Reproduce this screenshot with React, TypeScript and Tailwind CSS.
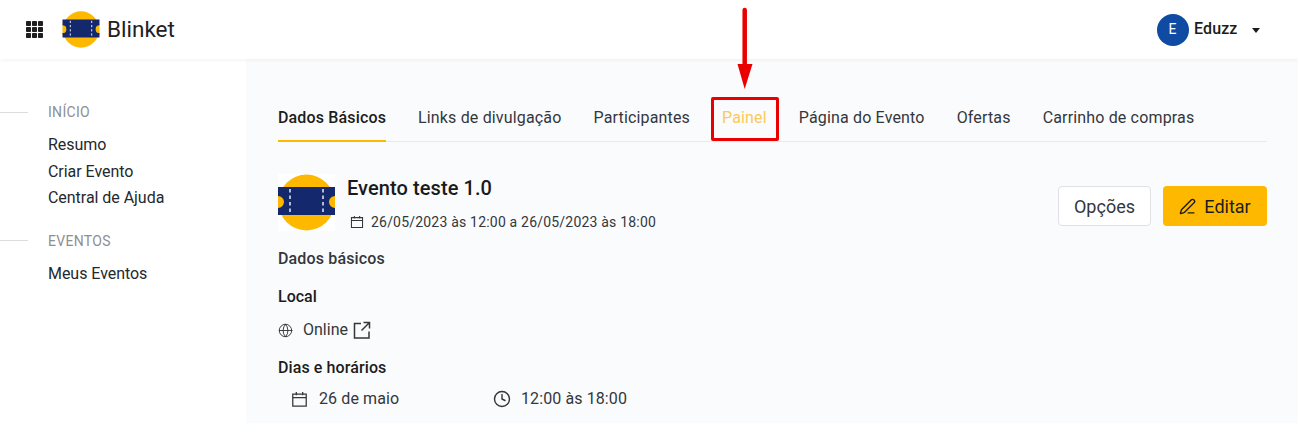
import { Clock, Globe, PenLine } from "lucide-react";

const TicketLogo = ({ className }: { className: string }) => (
  <svg viewBox="0 0 57 57" className={className} aria-hidden="true">
    <circle cx="28.5" cy="28.5" r="28" fill="#ffb800" />
    <rect x="0" y="20" width="57" height="16" fill="#ffb800" />
    <path d="M0 13h57v9a6 6 0 0 0 0 12v7H0v-7a6 6 0 0 0 0-12z" fill="#14286e" />
    <path d="M12 15v26M45 15v26" stroke="#e8ecf5" strokeWidth="1.5" strokeDasharray="3.5 3" />
  </svg>
);

const GridIcon = () => (
  <svg viewBox="0 0 17 17" className="h-[17px] w-[17px]" fill="#1f1f1f" aria-hidden="true">
    {[0, 6, 12].map((y) =>
      [0, 6, 12].map((x) => <rect key={`${x}-${y}`} x={x} y={y} width="5" height="5" rx="0.8" />),
    )}
  </svg>
);

const CalendarIcon = ({ className }: { className: string }) => (
  <svg viewBox="0 0 24 24" className={className} fill="none" stroke="currentColor" strokeWidth="1.8" aria-hidden="true">
    <path d="M2.5 4.5h19v17h-19zM2.5 9.5h19M7.5 1.5v4.5M16.5 1.5v4.5" />
  </svg>
);

const OpenIcon = () => (
  <svg viewBox="0 0 18 18" className="ml-[5px] h-[18px] w-[18px]" fill="none" stroke="currentColor" strokeWidth="1.5" aria-hidden="true">
    <path d="M8 2.5H1.5v14.5h14.5v-6.5M10.5 1.5h6v6M16.5 1.5l-8 8" />
  </svg>
);

const tabs = ["Dados Básicos", "Links de divulgação", "Participantes", "Painel", "Página do Evento", "Ofertas", "Carrinho de compras"];

const Header = () => (
  <header className="relative z-10 flex h-[59px] shrink-0 items-center justify-between bg-white pr-[38px] pl-[26px] shadow-[0_1px_4px_rgba(0,0,0,0.06)]">
    <div className="flex items-center">
      <GridIcon />
      <TicketLogo className="ml-[19px] h-[37px] w-[38px]" />
      <span className="mb-[1px] ml-[7px] text-[22.5px] leading-none text-[#202124]">Blinket</span>
    </div>
    <div className="flex items-center">
      <div className="flex h-[32px] w-[32px] items-center justify-center rounded-full bg-[#0f4aa3] text-[14px] text-white">E</div>
      <span className="mb-[1px] ml-[5.5px] text-[16px] font-medium tracking-[0.1px] text-[#1c1c1c]">Eduzz</span>
      <div className="mt-[2px] ml-[14.5px] h-0 w-0 border-x-[4px] border-t-[5px] border-x-transparent border-t-[#1c1c1c]" />
    </div>
  </header>
);

const NavGroup = ({ title, items }: { title: string; items: string[] }) => (
  <div>
    <div className="flex items-center">
      <div className="h-px w-[28px] bg-[#dcdcdc]" />
      <span className="ml-[20px] text-[14px] leading-[20px] tracking-[0.3px] text-[#8f8f8f]">{title}</span>
    </div>
    <ul className="mt-[10px] pl-[48px]">
      {items.map((item) => (
        <li key={item} className="text-[16px] leading-[26.5px] tracking-[-0.04px] text-[#25282c]">{item}</li>
      ))}
    </ul>
  </div>
);

const Sidebar = () => (
  <aside className="flex w-[246px] shrink-0 flex-col gap-[19px] bg-white pt-[43px]">
    <NavGroup title="INÍCIO" items={["Resumo", "Criar Evento", "Central de Ajuda"]} />
    <NavGroup title="EVENTOS" items={["Meus Eventos"]} />
  </aside>
);

const Tabs = () => (
  <nav className="flex h-[51px] gap-[32px] border-b border-[#e8e9eb]">
    {tabs.map((tab, i) => (
      <div
        key={tab}
        className={
          i === 0
            ? "h-[51px] border-b-2 border-[#ffb800] pt-[16px] text-[16px] leading-[22px] font-medium tracking-[0.15px] text-[#1c1c1c]"
            : i === 3
              ? "pt-[16px] text-[16px] leading-[22px] tracking-[0.16px] text-[#fbc95c]"
              : "pt-[16px] text-[16px] leading-[22px] tracking-[0.16px] text-[#33373c]"
        }
      >
        {tab}
      </div>
    ))}
  </nav>
);

const Annotation = () => (
  <div className="absolute inset-0 z-20">
    <div className="absolute top-[97px] left-[711px] h-[44px] w-[68px] rounded-[2px] border-[3px] border-[#ea0000]" />
    <svg className="absolute top-[7px] left-[736px] h-[83px] w-[18px]" viewBox="0 0 18 83" aria-hidden="true">
      <path d="M8.7 3v58" stroke="#ea0000" strokeWidth="4.5" strokeLinecap="round" />
      <path d="M1.5 57h15L8.7 82z" fill="#ea0000" />
    </svg>
  </div>
);

export default function App() {
  return (
    <div className="relative flex h-[423px] w-[1298px] flex-col overflow-hidden bg-[#fafbfd] font-['Roboto',sans-serif]">
      <Header />
      <div className="flex min-h-0 flex-1">
        <Sidebar />
        <main className="min-w-0 flex-1 pt-[32px] pr-[31px] pl-[32px]">
          <Tabs />
          <div className="mt-[32px] flex h-[74px] items-start justify-between">
            <div className="flex">
              <TicketLogo className="h-[57px] w-[57px] bg-white" />
              <div className="ml-[12px]">
                <h1 className="text-[20px] leading-[28px] font-medium tracking-[0.08px] text-[#1a1a1a]">Evento teste 1.0</h1>
                <div className="mt-[10px] flex items-center text-[14px] leading-[20px] tracking-[0.2px] text-[#33373c]">
                  <CalendarIcon className="ml-[3px] h-[14px] w-[14px]" />
                  <span className="ml-[7px]">26/05/2023 às 12:00 a 26/05/2023 às 18:00</span>
                </div>
              </div>
            </div>
            <div className="mt-[12px] flex gap-[12px]">
              <button type="button" className="h-[40px] w-[93px] rounded-[4px] border border-[#dfe1e5] bg-white text-[18px] text-[#33373c]">Opções</button>
              <button type="button" className="flex h-[40px] w-[104px] items-center justify-center gap-[8px] rounded-[4px] bg-[#ffb800] text-[18px] text-[#1c1c1c]">
                <PenLine className="h-[17px] w-[17px]" strokeWidth={2} />
                Editar
              </button>
            </div>
          </div>
          <h2 className="text-[16px] leading-[22px] font-medium tracking-[0.15px] text-[#33373c]">Dados básicos</h2>
          <h2 className="mt-[16px] text-[16px] leading-[22px] font-medium text-[#1c1c1c]">Local</h2>
          <div className="mt-[11px] flex items-center text-[16px] leading-[22px] text-[#33373c]">
            <Globe className="h-[15px] w-[15px]" strokeWidth={1.5} />
            <span className="ml-[10px]">Online</span>
            <OpenIcon />
          </div>
          <h2 className="mt-[16px] text-[16px] leading-[22px] font-medium tracking-[0.1px] text-[#1c1c1c]">Dias e horários</h2>
          <div className="mt-[9px] flex items-center pl-[13px] text-[16px] leading-[22px] tracking-[0.03px] text-[#33373c]">
            <CalendarIcon className="h-[17px] w-[17px]" />
            <span className="ml-[11px] w-[174px] tracking-[0.1px]">26 de maio</span>
            <Clock className="h-[18px] w-[18px]" strokeWidth={1.9} />
            <span className="ml-[10px] tracking-[0.1px]">12:00 às 18:00</span>
          </div>
        </main>
      </div>
      <Annotation />
    </div>
  );
}
